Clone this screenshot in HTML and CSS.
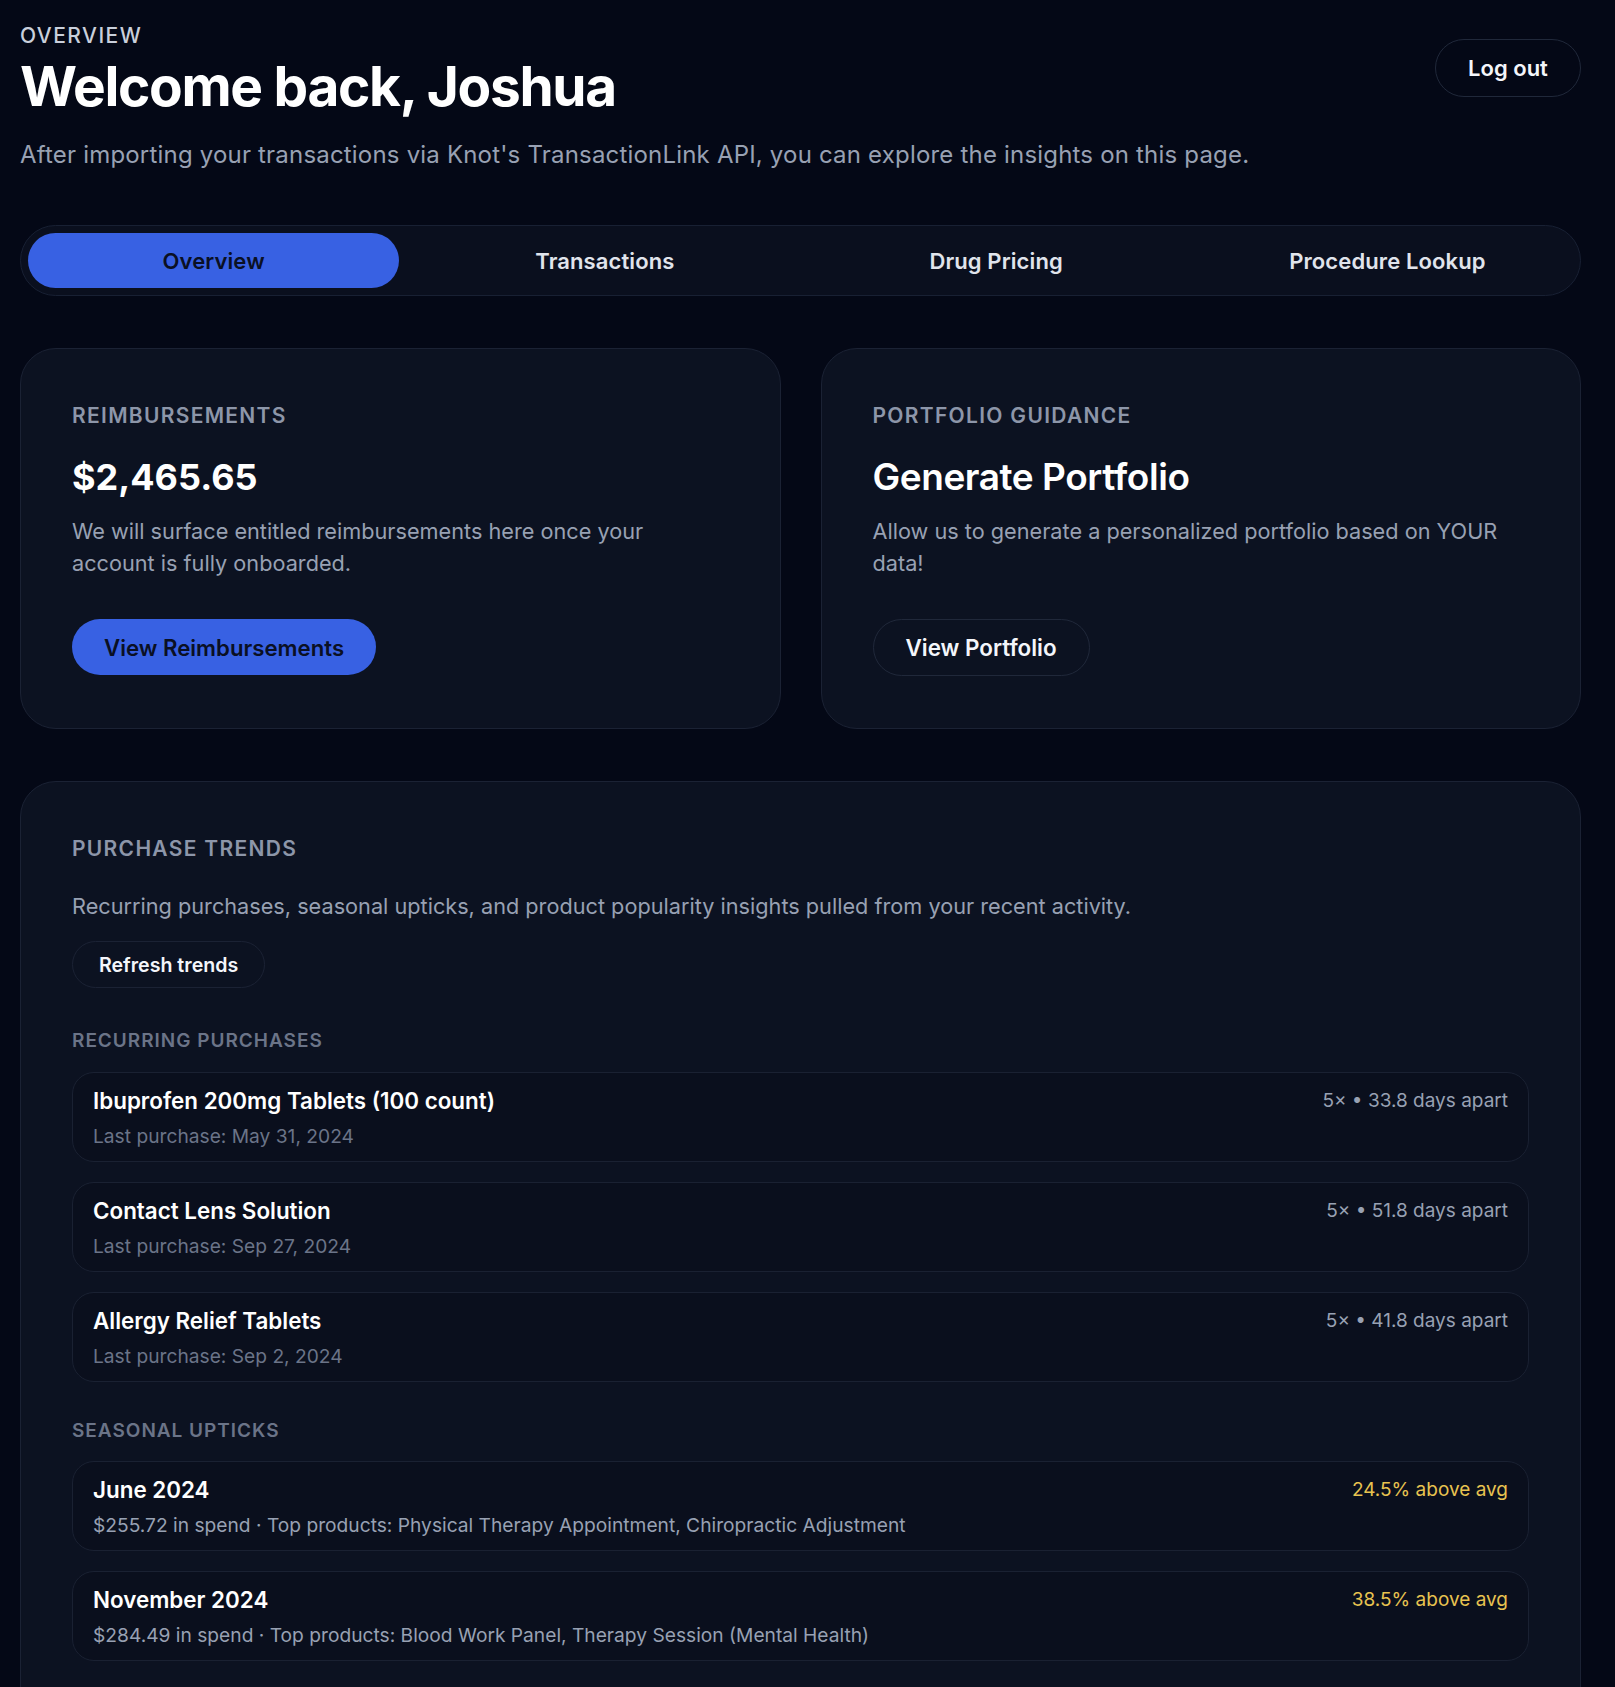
FILE: index.html
```html
<!DOCTYPE html>
<html lang="en">
<head>
<meta charset="utf-8">
<title>Overview</title>
<link rel="stylesheet" href="styles.css">
</head>
<body>
<div class="page">
  <header class="header">
    <div class="header-text">
      <div class="eyebrow">OVERVIEW</div>
      <h1 class="title">Welcome back, Joshua</h1>
      <p class="subtitle">After importing your transactions via Knot's TransactionLink API, you can explore the insights on this page.</p>
    </div>
    <button class="btn btn-outline btn-logout">Log out</button>
  </header>

  <nav class="tabs">
    <button class="tab tab-active">Overview</button>
    <button class="tab">Transactions</button>
    <button class="tab">Drug Pricing</button>
    <button class="tab">Procedure Lookup</button>
  </nav>

  <section class="cards">
    <div class="card">
      <div class="label">REIMBURSEMENTS</div>
      <div class="amount">$2,465.65</div>
      <p class="desc">We will surface entitled reimbursements here once your account is fully onboarded.</p>
      <button class="btn btn-primary">View Reimbursements</button>
    </div>
    <div class="card">
      <div class="label">PORTFOLIO GUIDANCE</div>
      <div class="amount amount-title">Generate Portfolio</div>
      <p class="desc">Allow us to generate a personalized portfolio based on YOUR data!</p>
      <button class="btn btn-outline">View Portfolio</button>
    </div>
  </section>

  <section class="card trends">
    <div class="label">PURCHASE TRENDS</div>
    <p class="desc trends-desc">Recurring purchases, seasonal upticks, and product popularity insights pulled from your recent activity.</p>
    <button class="btn btn-outline btn-small">Refresh trends</button>

    <div class="group-label">RECURRING PURCHASES</div>
    <div class="rows">
      <div class="row">
        <div class="row-main">
          <div class="row-title">Ibuprofen 200mg Tablets (100 count)</div>
          <div class="row-sub">Last purchase: May 31, 2024</div>
        </div>
        <div class="row-meta">5× • 33.8 days apart</div>
      </div>
      <div class="row">
        <div class="row-main">
          <div class="row-title">Contact Lens Solution</div>
          <div class="row-sub">Last purchase: Sep 27, 2024</div>
        </div>
        <div class="row-meta">5× • 51.8 days apart</div>
      </div>
      <div class="row">
        <div class="row-main">
          <div class="row-title">Allergy Relief Tablets</div>
          <div class="row-sub">Last purchase: Sep 2, 2024</div>
        </div>
        <div class="row-meta">5× • 41.8 days apart</div>
      </div>
    </div>

    <div class="group-label group-label-spaced">SEASONAL UPTICKS</div>
    <div class="rows">
      <div class="row">
        <div class="row-main">
          <div class="row-title">June 2024</div>
          <div class="row-sub row-sub-light">$255.72 in spend · Top products: Physical Therapy Appointment, Chiropractic Adjustment</div>
        </div>
        <div class="row-meta row-meta-warn">24.5% above avg</div>
      </div>
      <div class="row">
        <div class="row-main">
          <div class="row-title">November 2024</div>
          <div class="row-sub row-sub-light">$284.49 in spend · Top products: Blood Work Panel, Therapy Session (Mental Health)</div>
        </div>
        <div class="row-meta row-meta-warn">38.5% above avg</div>
      </div>
    </div>
  </section>
</div>
</body>
</html>
```

FILE: styles.css
```css
* { box-sizing: border-box; }

html, body {
  margin: 0;
  padding: 0;
  background: #040816;
}

body {
  font-family: Inter, "Noto Sans", "Liberation Sans", sans-serif;
  color: #f4f6fb;
}

.page {
  width: 1561px;
  margin-left: 20px;
  padding-top: 22px;
  display: flex;
  flex-direction: column;
}

button {
  font-family: inherit;
  cursor: pointer;
}

/* header */
.header {
  display: flex;
  justify-content: space-between;
  align-items: flex-start;
}

.eyebrow {
  font-size: 21px;
  line-height: 28px;
  font-weight: 500;
  letter-spacing: 0.07em;
  color: #c9cfdb;
}

.title {
  margin: 5px 0 0;
  font-size: 55px;
  line-height: 62px;
  font-weight: 700;
  letter-spacing: -0.024em;
  color: #ffffff;
}

.subtitle {
  margin: 22px 0 0;
  font-size: 24px;
  line-height: 32px;
  letter-spacing: 0.008em;
  color: #98a1b3;
}

.btn {
  border-radius: 999px;
  font-weight: 600;
  white-space: nowrap;
}

.btn-outline {
  background: transparent;
  border: 1px solid #20283a;
  color: #f4f6fb;
}

.btn-logout {
  margin-top: 17px;
  height: 58px;
  width: 146px;
  font-size: 22px;
}

/* tabs */
.tabs {
  margin-top: 54px;
  height: 71px;
  padding: 7px;
  border: 1px solid #182033;
  border-radius: 999px;
  background: #0a0f1e;
  display: grid;
  grid-template-columns: repeat(4, 1fr);
  gap: 20px;
}

.tab {
  border: none;
  border-radius: 999px;
  background: transparent;
  color: #e0e4ec;
  font-size: 22px;
  letter-spacing: 0.005em;
  font-weight: 600;
}

.tab-active {
  background: #3861e3;
  color: #0a1024;
}

/* cards */
.cards {
  margin-top: 52px;
  display: grid;
  grid-template-columns: 1fr 1fr;
  gap: 40px;
}

.card {
  background: #0c1221;
  border: 1px solid #1b2234;
  border-radius: 36px;
  padding: 52px 51px;
  display: flex;
  flex-direction: column;
  align-items: flex-start;
}

.label {
  font-size: 21px;
  line-height: 30px;
  font-weight: 600;
  letter-spacing: 0.062em;
  color: #8d96a9;
}

.amount {
  margin-top: 23px;
  font-size: 36px;
  line-height: 46px;
  font-weight: 700;
  color: #ffffff;
}

.amount-title {
  font-size: 37px;
  font-weight: 600;
  letter-spacing: -0.012em;
}

.desc {
  margin: 15px 0 0;
  font-size: 21.7px;
  line-height: 32px;
  color: #98a1b3;
}

.cards .desc {
  max-width: 630px;
}

.btn-primary {
  margin-top: 40px;
  height: 56px;
  padding: 0 32px;
  border: none;
  background: #3861e3;
  color: #0a1024;
  font-size: 22.2px;
}

.cards .btn-outline {
  margin-top: 40px;
  height: 57px;
  padding: 0 32px;
  font-size: 22.4px;
}

/* trends */
.trends {
  margin-top: 52px;
  border-bottom-left-radius: 0;
  border-bottom-right-radius: 0;
  padding-bottom: 40px;
}

.trends-desc {
  margin-top: 26px;
}

.btn-small {
  margin-top: 19px;
  height: 47px;
  padding: 0 26px;
  font-size: 19.6px;
  border-color: #1b2234;
}

.group-label {
  margin-top: 40px;
  font-size: 19px;
  line-height: 26px;
  font-weight: 600;
  letter-spacing: 0.052em;
  color: #6b7488;
}

.group-label-spaced {
  margin-top: 36px;
}

.rows {
  align-self: stretch;
  margin-top: 18px;
  display: flex;
  flex-direction: column;
  gap: 20px;
}

.group-label-spaced + .rows {
  margin-top: 17px;
}

.row {
  background: #0a0f1d;
  border: 1px solid #1a2132;
  border-radius: 22px;
  padding: 14px 20px 12px;
  display: flex;
  justify-content: space-between;
  align-items: flex-start;
}

.row-title {
  font-size: 22.4px;
  line-height: 28px;
  font-weight: 600;
  color: #ffffff;
}

.row-sub {
  margin-top: 8px;
  font-size: 19.2px;
  line-height: 26px;
  color: #6b7488;
}

.row-sub-light {
  color: #98a1b3;
}

.row-meta {
  font-size: 19px;
  line-height: 28px;
  color: #98a1b3;
}

.row-meta-warn {
  color: #e8c350;
}
```
